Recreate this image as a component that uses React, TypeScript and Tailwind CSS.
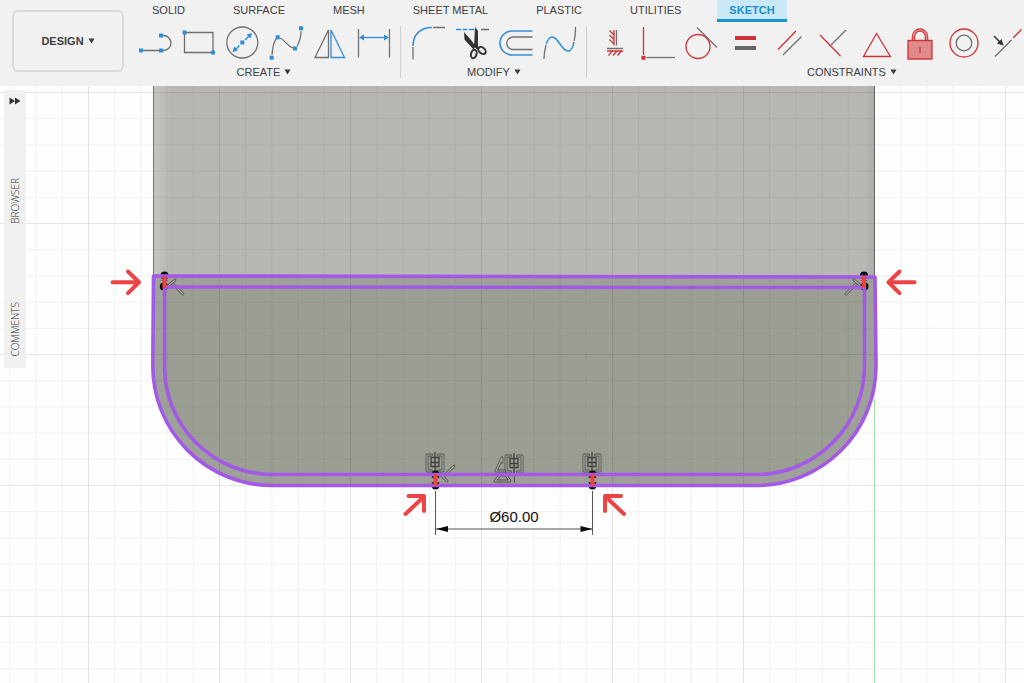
import { useState } from "react";
import type { ReactNode } from "react";

const BLUE = "#2f8fd6";
const GRAY = "#707070";
const RED = "#cf3338";
const PURPLE = "#a259e6";
const MARK = "#ec4444";

interface Tool {
  name: string;
  icon: ReactNode;
}

interface ToolGroupProps {
  label: string;
  tools: Tool[];
  className?: string;
}

const tabs = [
  "SOLID",
  "SURFACE",
  "MESH",
  "SHEET METAL",
  "PLASTIC",
  "UTILITIES",
  "SKETCH",
];

// Small square handle used on sketch tool icons
function Handle({ x, y, color = BLUE }: { x: number; y: number; color?: string }) {
  return <rect x={x - 2} y={y - 2} width="4" height="4" fill={color} stroke="none" />;
}

const createTools: Tool[] = [
  {
    name: "Line",
    icon: (
      <>
        <path d="M9 26.5h20M29 11.5h2.5a7.5 7.5 0 0 1 0 15H29" />
        <Handle x={9} y={26.5} />
        <Handle x={29} y={26.5} />
        <Handle x={29} y={11.5} />
      </>
    ),
  },
  {
    name: "Rectangle",
    icon: (
      <>
        <path d="M8.5 8.5h28.5v20h-28.5z" />
        <Handle x={8.5} y={8.5} />
        <Handle x={37} y={28.5} />
      </>
    ),
  },
  {
    name: "Circle",
    icon: (
      <>
        <circle cx="22.3" cy="18.5" r="15.5" />
        <path d="M15 26l4.5-4.5M25 16l4.5-4.5" stroke={BLUE} strokeWidth="1.5" />
        <path d="M12.5 28l1.5-5.5 4 4zM32 9l-5.5 1.5 4 4z" fill={BLUE} stroke="none" />
        <Handle x={22.3} y={18.5} />
      </>
    ),
  },
  {
    name: "Spline",
    icon: (
      <>
        <path d="M8 31C8.5 24 10 17 12.5 14.5M16 14C21 16 23 22 29 24.2M33 22.5C35.5 18 37 12 37 7" />
        <Handle x={7.7} y={33.7} />
        <Handle x={13.7} y={13.3} />
        <Handle x={31} y={24.5} />
        <Handle x={37} y={4.2} />
      </>
    ),
  },
  {
    name: "Mirror",
    icon: (
      <>
        <path d="M20.5 6v27.5H7z" />
        <path d="M23 6v27.5h13.5z" stroke={BLUE} />
      </>
    ),
  },
  {
    name: "Sketch Dimension",
    icon: (
      <>
        <path d="M6.5 5v28.5M37.5 5v28.5" />
        <path d="M9 13.5h26" stroke={BLUE} />
        <path d="M7 13.5l5-3v6zM37 13.5l-5-3v6z" fill={BLUE} stroke="none" />
      </>
    ),
  },
];

const modifyTools: Tool[] = [
  {
    name: "Fillet",
    icon: (
      <>
        <path d="M7 23v12.5M27 3.5h12" />
        <path d="M7 22C7 11 14 3.5 26 3.5" stroke={BLUE} strokeWidth="1.5" />
      </>
    ),
  },
  {
    name: "Trim",
    icon: (
      <>
        <path d="M6 5.5h20" stroke={BLUE} strokeWidth="1.6" strokeDasharray="5 1.5" />
        <path d="M31 5.5h8" strokeWidth="1.6" />
        <path d="M14 8l7 8 4.5 6-2 3.5-9-10zM25 3l3 4v19l-4-3z" fill="#333" stroke="none" />
        <g stroke="#333" strokeWidth="2">
          <ellipse cx="23.800" cy="30" rx="2.8" ry="4.3" transform="rotate(12 23.8 30)" />
          <ellipse cx="32" cy="26.5" rx="2.8" ry="4.3" transform="rotate(-50 32 26.5)" />
          <path d="M25 22l4 3" />
        </g>
      </>
    ),
  },
  {
    name: "Offset",
    icon: (
      <>
        <path d="M38.5 7H18a12 12 0 0 0 0 24h20.5" stroke={BLUE} strokeWidth="1.6" />
        <path d="M38.5 13H19a6 6 0 0 0 0 12.5h19.5" />
      </>
    ),
  },
  {
    name: "Blend Curve",
    icon: (
      <>
        <path d="M6 35C6 30 7 25 8 21M36 17C37.5 12 37.5 8 37.5 3" />
        <path
          d="M8.2 20C11 12 15 11 19 16C23 21 27 29 32 26.5C34 25 35.5 21 35.8 18"
          stroke={BLUE}
          strokeWidth="1.5"
        />
      </>
    ),
  },
];

const constraintTools: Tool[] = [
  {
    name: "Horizontal/Vertical",
    icon: (
      <>
        <path d="M24.5 6v15.5M15 24.5h16" />
        <path
          d="M22 6v15.5M17.5 6.5l4.5 4.5M17.5 11l4.5 4.5M17.5 15.5l4.5 4.5M15 27h16M20.5 27l-4 4.5M25 27l-4 4.5M29.5 27l-4 4.5"
          stroke={RED}
        />
      </>
    ),
  },
  {
    name: "Coincident",
    icon: (
      <>
        <path d="M7.5 3v28" stroke={RED} />
        <path d="M10.5 33.5H39" />
        <Handle x={7.5} y={33.8} color={RED} />
      </>
    ),
  },
  {
    name: "Tangent",
    icon: (
      <>
        <circle cx="18" cy="22.5" r="12" stroke={RED} />
        <path d="M17 3.5l20 20" />
      </>
    ),
  },
  {
    name: "Equal",
    icon: (
      <g stroke="none">
        <path d="M11 12h21v4H11z" fill={RED} />
        <path d="M11 22h21v4H11z" fill="#666" />
      </g>
    ),
  },
  {
    name: "Parallel",
    icon: (
      <>
        <path d="M10 25.5L28 7" stroke={RED} />
        <path d="M15 31l18.5-18.5" />
      </>
    ),
  },
  {
    name: "Perpendicular",
    icon: (
      <>
        <path d="M8 11l20.5 21" stroke={RED} />
        <path d="M19 21L34 6" />
      </>
    ),
  },
  {
    name: "Midpoint",
    icon: <path d="M20.5 9.5l-13 23h27z" stroke={RED} />,
  },
  {
    name: "Fix/Unfix",
    icon: (
      <>
        <path d="M13.5 16.5v-4a6.5 6.5 0 0 1 13 0v4" stroke={RED} strokeWidth="3.5" />
        <path d="M13.5 16.5v-4a6.5 6.5 0 0 1 13 0v4" stroke="#e9a0a0" strokeWidth="1.2" />
        <path d="M8 16.5h24v18.5h-24z" stroke={RED} fill="#e08a8a" />
        <path d="M20 23v6" stroke={RED} />
      </>
    ),
  },
  {
    name: "Concentric",
    icon: (
      <>
        <circle cx="20" cy="19" r="14" stroke={RED} />
        <circle cx="20" cy="19" r="7.8" />
      </>
    ),
  },
  {
    name: "Symmetry",
    icon: (
      <>
        <path d="M25 14l8.5-8.5" stroke={RED} />
        <path d="M7 32.5L23.5 16" />
        <path d="M6 12l6 6" stroke="#333" strokeWidth="1.5" />
        <path d="M15.5 21.5l-6.5-2 4.5-4.5z" fill="#333" stroke="none" />
      </>
    ),
  },
];

function Caret() {
  return (
    <svg width="7" height="6" viewBox="0 0 7 6" aria-hidden="true">
      <path d="M0.5 0.5h6L3.5 5.5z" fill="#3a3a3a" />
    </svg>
  );
}

function ToolGroup({ label, tools, className = "" }: ToolGroupProps) {
  return (
    <div className={`flex shrink-0 flex-col ${className}`}>
      <div className="flex">
        {tools.map((tool) => (
          <button key={tool.name} type="button" aria-label={tool.name} className="h-9 w-11">
            <svg
              className="block h-9 w-11"
              viewBox="0 0 44 36"
              fill="none"
              stroke={GRAY}
              strokeWidth="1.3"
            >
              {tool.icon}
            </svg>
          </button>
        ))}
      </div>
      <button
        type="button"
        className="mt-1 flex h-4 items-center justify-center gap-1 text-[11px] leading-4"
      >
        {label}
        <Caret />
      </button>
    </div>
  );
}

function Divider() {
  return <div className="mt-[2px] mr-[5px] ml-1 h-[52px] w-px shrink-0 bg-[#cfcfcf]" />;
}

function Toolbar() {
  const [activeTab, setActiveTab] = useState("SKETCH");

  return (
    <header className="flex h-[86px] shrink-0 gap-2 overflow-hidden bg-[#f1f1f1] pl-3 text-[#404040]">
      <button
        type="button"
        className="mt-[10px] flex h-[62px] w-28 shrink-0 items-center justify-center gap-1 rounded-md border-2 border-[#d9d9d9] text-[11px] font-bold"
      >
        DESIGN
        <Caret />
      </button>

      <div className="flex min-w-0 flex-1 flex-col">
        <nav className="flex h-[22px] gap-6 pl-2">
          {tabs.map((tab) => (
            <button
              key={tab}
              type="button"
              onClick={() => setActiveTab(tab)}
              className={`h-full shrink-0 border-b-3 px-3 text-[11px] leading-4 whitespace-nowrap ${
                activeTab === tab
                  ? "border-[#1b95cf] bg-[#c9e9f6] font-bold text-[#1b8fcf]"
                  : "border-transparent"
              }`}
            >
              {tab}
            </button>
          ))}
        </nav>

        <div className="mt-[2px] flex">
          <ToolGroup label="CREATE" tools={createTools} />
          <Divider />
          <ToolGroup label="MODIFY" tools={modifyTools} />
          <Divider />
          <ToolGroup label="CONSTRAINTS" tools={constraintTools} className="min-w-[520px]" />
        </div>
      </div>
    </header>
  );
}

function SidePanel() {
  return (
    <aside className="absolute top-1 left-1 flex w-[22px] flex-col items-center bg-[#f0f0f0] pt-[7px] pb-3 font-['Open_Sans',sans-serif] text-[10px] leading-4 text-[#555]">
      <button type="button" aria-label="Expand panel">
        <svg className="block" width="12" height="8" viewBox="0 0 12 8">
          <path d="M0.5 0.5L6 4 0.5 7.5zM6 0.5L11.5 4 6 7.5z" fill="#333" />
        </svg>
      </button>
      <button
        type="button"
        className="mt-[73px] rotate-180 font-light text-[#333] [writing-mode:vertical-rl]"
      >
        BROWSER
      </button>
      <button
        type="button"
        className="mt-[78px] rotate-180 font-light text-[#333] [writing-mode:vertical-rl]"
      >
        COMMENTS
      </button>
    </aside>
  );
}

// Hollow glyph: a dark stroke with a lighter core
function Glyph({ d }: { d: string }) {
  return (
    <g fill="none" strokeLinecap="round" strokeLinejoin="round">
      <path d={d} stroke="#4d4f4a" strokeWidth="2.8" />
      <path d={d} stroke="#a9aba3" strokeWidth="1.2" />
    </g>
  );
}

// Facing brackets either side of a centre line
function SymmetryGlyph({ x, y }: { x: number; y: number }) {
  return (
    <g transform={`translate(${x} ${y})`}>
      <Glyph d="M-3.5 -8h-4.5v16h4.5M3.5 -8h4.5v16h-4.5" />
      <path d="M-4 -5.5h8v9h-8zM-4 -0.5h8M0 -11v22" fill="none" stroke="#3f413d" strokeWidth="1.3" />
    </g>
  );
}

function SketchCanvas() {
  return (
    <svg
      className="block h-full w-full"
      viewBox="0 86 1024 597"
      preserveAspectRatio="xMinYMin slice"
      role="img"
      aria-label="Sketch canvas"
    >
      <defs>
        <pattern id="minor" x="874" y="92" width="26.2" height="26.2" patternUnits="userSpaceOnUse">
          <path d="M0.5 0v26.2M0 0.5h26.2" stroke="#000" strokeOpacity="0.05" />
        </pattern>
        <pattern id="major" x="874" y="92" width="131" height="131" patternUnits="userSpaceOnUse">
          <path d="M0.5 0v131M0 0.5h131" stroke="#000" strokeOpacity="0.05" />
        </pattern>
        <linearGradient id="body" x1="0" x2="1" y1="0" y2="0">
          <stop offset="0" stopColor="#c6c5c0" />
          <stop offset="0.025" stopColor="#b9b7b4" />
          <stop offset="0.985" stopColor="#b9b7b4" />
          <stop offset="1" stopColor="#adaca8" />
        </linearGradient>
      </defs>

      <rect y="86" width="1024" height="597" fill="#fefefe" />

      {/* Extruded body and sketch profile */}
      <rect x="153" y="86" width="722" height="191" fill="url(#body)" />
      <path d="M153.5 86v190M874.5 86v190" stroke="#6f746c" />
      <path
        d="M153 276H875L876 366A119.5 119.5 0 0 1 756.5 485.5H272A119.5 119.5 0 0 1 152.8 366z"
        fill="#9fa09a"
      />
      <path
        d="M164.5 287H864.5V366A108.5 108.5 0 0 1 756.5 474.5H272A108 108 0 0 1 164.5 366z"
        fill="#9b9e92"
      />
      <rect y="86" width="1024" height="597" fill="url(#minor)" />
      <rect y="86" width="1024" height="597" fill="url(#major)" />
      <path d="M874.5 400v283" stroke="#a3dfa6" />

      {/* Constraint glyphs */}
      <Glyph d="M168 286l7-6M173 284l10 10" />
      <Glyph d="M861 286l-7-6M856 284l-10 10" />
      <Glyph d="M454 466l-10 10M441 475l6 6" />
      <SymmetryGlyph x={435} y={463} />
      <SymmetryGlyph x={592} y={463} />
      <SymmetryGlyph x={514} y={464} />
      <Glyph d="M502 458l-6 13h9M502 458v4M495 481h15l-4-6h-6z" />
      <path d="M514.5 474v9" stroke="#4d4f4a" />

      {/* Sketch points */}
      <g fill="#0c0c0c">
        <circle cx="164.5" cy="275.5" r="4" />
        <circle cx="163.8" cy="286.5" r="4" />
        <circle cx="864" cy="275.5" r="4" />
        <circle cx="864.5" cy="286.5" r="4" />
        <circle cx="435.5" cy="474.5" r="4" />
        <circle cx="435.5" cy="485.5" r="4" />
        <circle cx="592.5" cy="474.5" r="4" />
        <circle cx="592.5" cy="485.5" r="4" />
      </g>

      <g fill="none" stroke={PURPLE} strokeWidth="3.6" strokeLinejoin="round">
        <path d="M153.5 276L875 277 876 366A119.5 119.5 0 0 1 756.5 485.5H272A119.5 119.5 0 0 1 152.8 366z" />
        <path d="M164.5 287L864.5 287.5V366A108.5 108.5 0 0 1 756.5 474.5H272A108 108 0 0 1 164.5 366z" />
      </g>

      <path
        d="M161.5 280.5h6M861 280.5h6M431.5 477.5h8M588.5 477.5h8M431.5 482.5h8M588.5 482.5h8"
        stroke="#333"
        strokeOpacity="0.7"
      />
      <path
        d="M164.5 276v12M864 276v12M435.5 474v12M592.5 474v12"
        stroke={MARK}
        strokeWidth="4"
      />

      {/* Diameter dimension */}
      <path d="M435.5 491v44M592.5 491v44M436 529h156" stroke="#555" />
      <path d="M436 529l12-3v6zM592.5 529l-12-3v6z" fill="#0c0c0c" />
      <text
        x="514"
        y="522"
        textAnchor="middle"
        className="fill-[#111] font-['Liberation_Sans',sans-serif] text-[15px]"
      >
        Ø60.00
      </text>

      {/* Callout arrows */}
      <g
        fill="none"
        stroke={MARK}
        strokeWidth="4"
        strokeLinecap="round"
        strokeLinejoin="round"
      >
        <path d="M112.5 282.3H138M128 271.5l11 10.8-11 10.8" />
        <path d="M914.5 282.3H890M899.5 271.5l-11 10.8 11 10.8" />
        <path d="M405.5 514L424 496.5M408.5 496h15.5v15" />
        <path d="M624 514L605.5 496.5M621 496h-16v15" />
      </g>
    </svg>
  );
}

export default function App() {
  return (
    <div className="flex h-screen flex-col overflow-hidden bg-white font-['Liberation_Sans',sans-serif]">
      <Toolbar />
      <main className="relative min-h-0 flex-1">
        <SketchCanvas />
        <SidePanel />
      </main>
    </div>
  );
}
